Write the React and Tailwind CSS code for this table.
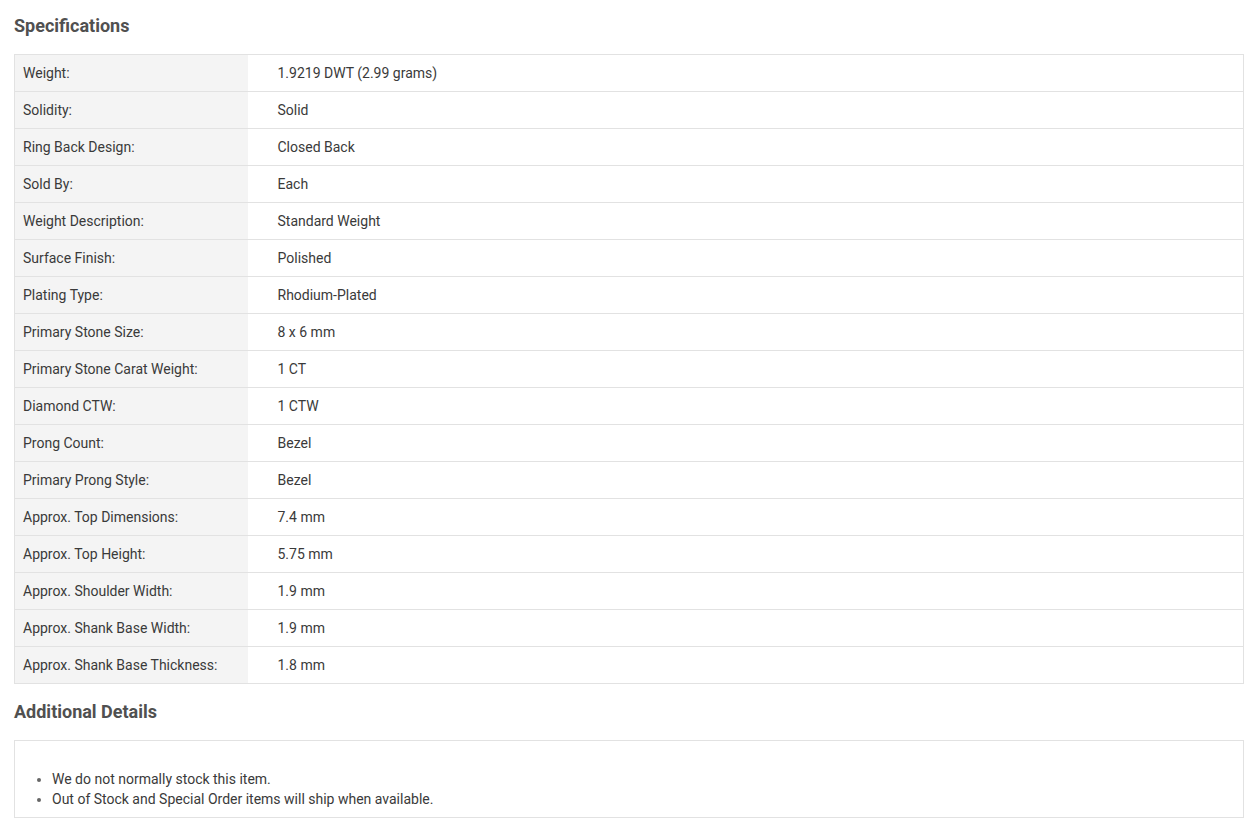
import React from "react"

const specs = [
  ["Weight:", "1.9219 DWT (2.99 grams)"],
  ["Solidity:", "Solid"],
  ["Ring Back Design:", "Closed Back"],
  ["Sold By:", "Each"],
  ["Weight Description:", "Standard Weight"],
  ["Surface Finish:", "Polished"],
  ["Plating Type:", "Rhodium-Plated"],
  ["Primary Stone Size:", "8 x 6 mm"],
  ["Primary Stone Carat Weight:", "1 CT"],
  ["Diamond CTW:", "1 CTW"],
  ["Prong Count:", "Bezel"],
  ["Primary Prong Style:", "Bezel"],
  ["Approx. Top Dimensions:", "7.4 mm"],
  ["Approx. Top Height:", "5.75 mm"],
  ["Approx. Shoulder Width:", "1.9 mm"],
  ["Approx. Shank Base Width:", "1.9 mm"],
  ["Approx. Shank Base Thickness:", "1.8 mm"],
]

const App = () => {
  return (
    <div
      className="bg-white min-h-screen pl-[14px] pr-[15px] pt-[15px] pb-[10px] text-[#3a3a3a]"
      style={{ fontFamily: "Roboto, 'Liberation Sans', sans-serif" }}
    >
      <h2 className="text-[18px] leading-[22px] font-bold text-[#505050] mb-[17px]">
        Specifications
      </h2>
      <table className="w-full border-collapse border border-[#e2e2e2] text-[14px]">
        <tbody>
          {specs.map(([label, value]) => (
            <tr key={label} className="border-b border-[#e2e2e2] h-[37px]">
              <td className="w-[233px] bg-[#f4f4f4] pl-[8px] align-middle">
                {label}
              </td>
              <td className="pl-[30px] align-middle">{value}</td>
            </tr>
          ))}
        </tbody>
      </table>
      <h2 className="text-[18px] leading-[22px] font-bold text-[#505050] mt-[17px] mb-[17px]">
        Additional Details
      </h2>
      <div className="border border-[#e2e2e2] pt-[28px] pb-[8px]">
        <ul className="list-disc pl-[37px] text-[14px] leading-[20px] marker:text-[#666]">
          <li>We do not normally stock this item.</li>
          <li>Out of Stock and Special Order items will ship when available.</li>
        </ul>
      </div>
    </div>
  )
}

export default App
